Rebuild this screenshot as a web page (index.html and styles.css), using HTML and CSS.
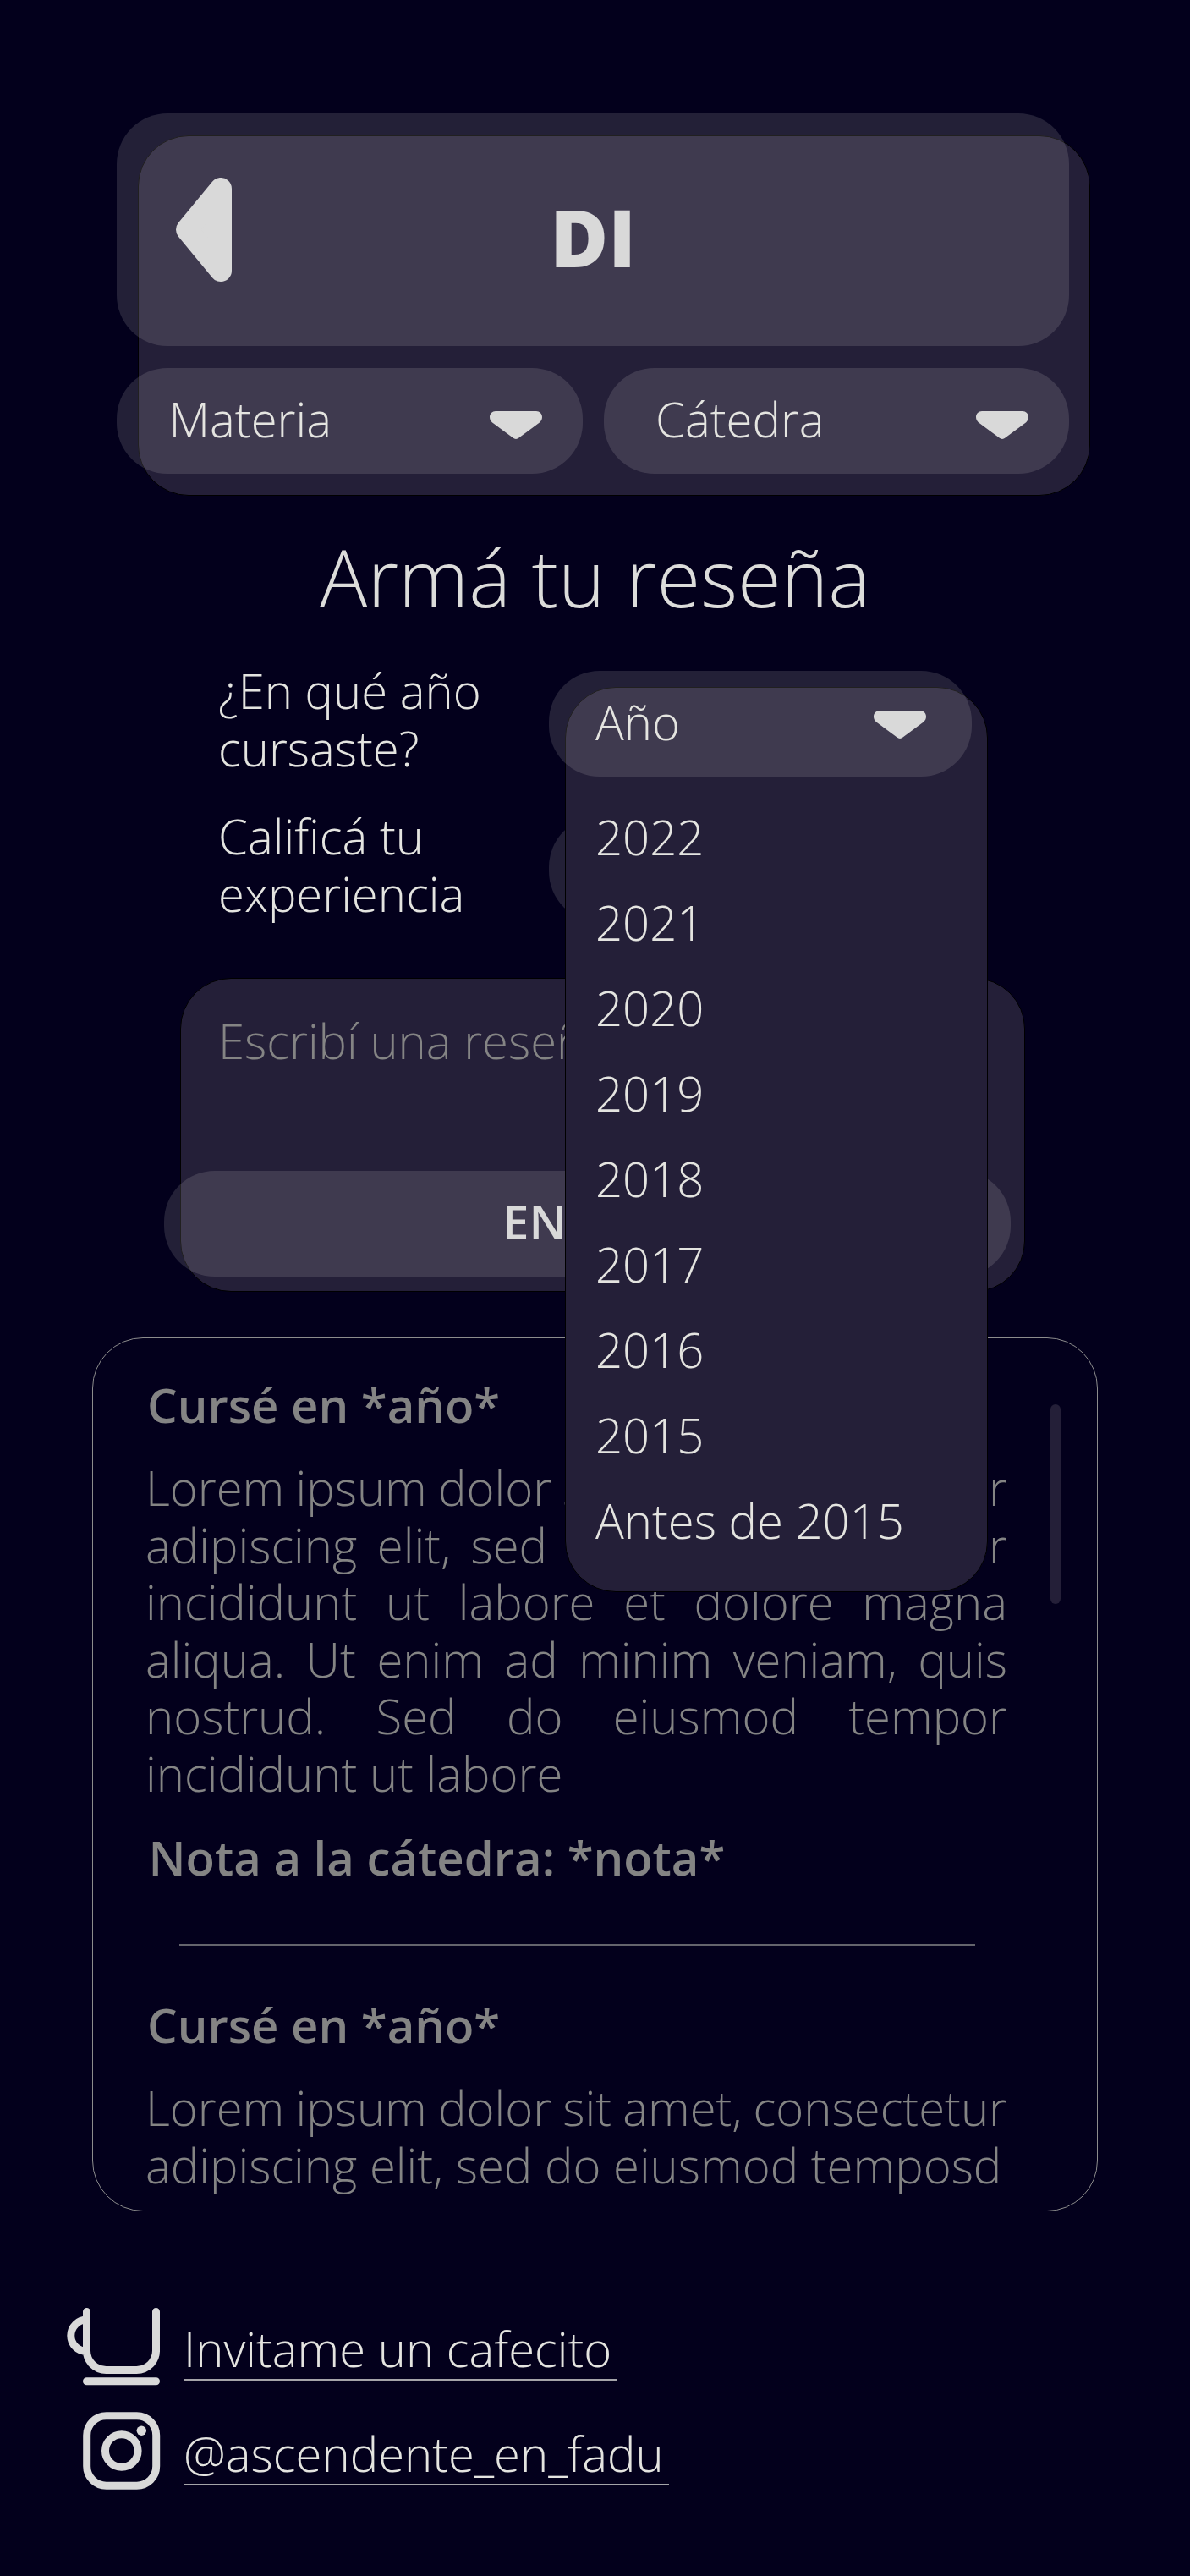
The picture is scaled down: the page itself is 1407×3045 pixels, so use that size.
FILE: index.html
```html
<!DOCTYPE html>
<html lang="es">
<head>
<meta charset="utf-8">
<title>Armá tu reseña</title>
<link rel="stylesheet" href="styles.css">
</head>
<body>
<svg class="sprite" width="0" height="0" aria-hidden="true">
  <symbol id="caret" viewBox="0 0 62 33">
    <path d="M7 0H55C58.900 0 62 3 62 7C62 9.500 61 11.500 59.200 13.200L34.500 31.600C32.500 33.300 29.500 33.300 27.500 31.600L2.800 13.200C1 11.500 0 9.500 0 7C0 3 3.100 0 7 0Z"/>
  </symbol>
</svg>
<header class="filters">
  <div class="title-bar">
    <svg class="back" viewBox="0 0 66 123"><path d="M53 13V110L13 61.500Z"/></svg>
    <h1>DI</h1>
  </div>
  <div class="filter-row">
    <div class="pill filter"><span>Materia</span><svg class="caret"><use href="#caret"/></svg></div>
    <div class="pill filter"><span>Cátedra</span><svg class="caret"><use href="#caret"/></svg></div>
  </div>
</header>
<main>
  <h2>Armá tu reseña</h2>
  <form>
    <div class="field">
      <label>¿En qué año<br>cursaste?</label>
      <div class="year">
        <ul class="menu">
          <li>2022</li><li>2021</li><li>2020</li><li>2019</li><li>2018</li><li>2017</li><li>2016</li><li>2015</li><li>Antes de 2015</li>
        </ul>
        <div class="pill year-pill"><span>Año</span><svg class="caret"><use href="#caret"/></svg></div>
      </div>
    </div>
    <div class="field">
      <label>Calificá tu<br>experiencia</label>
      <div class="pill"></div>
    </div>
    <div class="composer">
      <p>Escribí una reseña</p>
      <div class="pill send">ENVIAR</div>
    </div>
  </form>
  <section class="reviews">
    <div class="review-list">
      <article>
        <h3>Cursé en *año*</h3>
        <p><span class="tight">Lorem ipsum dolor sit amet, consectetur</span> adipiscing elit, sed do eiusmod tempor incididunt ut labore et dolore magna aliqua. Ut enim ad minim veniam, quis nostrud. Sed do eiusmod tempor incididunt ut labore</p>
        <h3 class="grade">Nota a la cátedra: *nota*</h3>
      </article>
      <hr>
      <article>
        <h3>Cursé en *año*</h3>
        <p><span class="tight">Lorem ipsum dolor sit amet, consectetur</span> adipiscing elit, sed do eiusmod temposd</p>
      </article>
    </div>
    <div class="scrollbar"></div>
  </section>
</main>
<footer>
  <div class="link">
    <svg class="cup" viewBox="0 0 110 92">
      <path d="M23.500 4.500V50A23 23 0 0 0 46.500 73.500H82.500A23 23 0 0 0 105.500 50V4.500M23.500 86.700H105.500M23.500 14.100A18.700 18.700 0 0 0 23.500 51.500"/>
    </svg>
    <a>Invitame un cafecito</a>
  </div>
  <div class="link">
    <svg class="insta" viewBox="0 0 92 92">
      <rect x="4.700" y="4.700" width="82" height="82.500" rx="23"/>
      <circle cx="45.800" cy="46" r="19.300"/>
      <circle class="dot" cx="69.300" cy="22.300" r="5.700"/>
    </svg>
    <a>@ascendente_en_fadu</a>
  </div>
</footer>
</body>
</html>
```
FILE: styles.css
```css
* { box-sizing: border-box; margin: 0; padding: 0; }
body {
  width: 1407px;
  height: 3045px;
  padding-top: 134px;
  background: #03001c;
  color: #e4e4e0;
  font: 300 56.25px/67.5px "Open Sans", sans-serif;
}
.sprite { position: absolute; }
.pill {
  height: 125px;
  border-radius: 60px;
  background: rgba(222, 217, 216, 0.15);
}
.caret { width: 62px; height: 33px; fill: #d9d9d9; }

.filters {
  position: relative;
  isolation: isolate;
  display: flex;
  flex-direction: column;
  gap: 26px;
  width: 1126px;
  margin-left: 138px;
}
.filters::before {
  content: "";
  position: absolute;
  z-index: -1;
  left: 25px;
  top: 26px;
  width: 1124px;
  height: 424px;
  border: 1px solid #000;
  border-radius: 60px;
  background: #241f38;
}
.title-bar {
  display: flex;
  align-items: center;
  height: 275px;
  padding: 0 136px 0 70px;
  border-radius: 60px;
  background: rgba(222, 217, 216, 0.15);
}
.back {
  width: 66px;
  height: 123px;
  fill: #d9d9d9;
  stroke: #d9d9d9;
  stroke-width: 26px;
  stroke-linejoin: round;
}
h1 {
  flex: 1;
  padding-top: 17px;
  text-align: center;
  font-size: 94px;
  line-height: 114px;
  font-weight: 800;
  color: #d9d9d9;
}
.filter-row { display: flex; gap: 25px; }
.filter {
  display: flex;
  flex: 1;
  align-items: center;
  justify-content: space-between;
  padding: 10px 48px 0 61.5px;
}
.filter span { margin-top: -13.5px; }

h2 {
  margin-top: 65px;
  text-align: center;
  font-size: 94.1px;
  line-height: 114px;
  font-weight: 300;
  color: #dcdcda;
}
form { margin-top: 44px; }
.field {
  display: grid;
  grid-template-columns: 391px 500px;
  align-items: end;
  height: 134.5px;
  margin: 0 0 37.5px 258px;
}
.field label { align-self: start; }
.year { position: relative; z-index: 2; }
.year-pill {
  position: relative;
  display: flex;
  justify-content: space-between;
  padding: 26.5px 54px 0 55px;
}
.year-pill .caret { margin-top: 20px; }
.menu {
  position: absolute;
  left: 19px;
  top: 19px;
  width: 500px;
  height: 1070px;
  padding: 126px 0 0 35px;
  border: 1px solid #000;
  border-radius: 60px;
  background: #241f38;
  list-style: none;
  line-height: 101px;
}
.composer {
  display: flex;
  flex-direction: column;
  justify-content: space-between;
  width: 999px;
  height: 371px;
  margin: 66.5px 0 0 213px;
  padding: 40px 0 17px;
  border: 1px solid #000;
  border-radius: 60px;
  background: #241f38;
}
.composer p { padding-left: 44px; color: #848484; }
.send {
  width: 1001px;
  margin-left: -20px;
  text-align: center;
  font-weight: 600;
  line-height: 119px;
  color: #d9d9d9;
}

.reviews {
  display: flex;
  justify-content: space-between;
  width: 1189px;
  height: 1033px;
  margin: 54px 0 0 109px;
  padding: 45px 43px 0 62px;
  border: 1px solid #8c8c8c;
  border-radius: 60px;
  color: #848484;
}
.review-list { width: 1019px; }
.reviews h3 { padding-left: 2px; font-size: 56.25px; font-weight: 600; line-height: 67px; }
.reviews p { margin-top: 31px; text-align: justify; }
.reviews .grade { margin-top: 32px; padding-left: 3.5px; }
.tight { word-spacing: -1.8px; }
hr { width: 941px; height: 2px; margin: 69px 0 60px 40px; border: 0; background: #64646c; }
.scrollbar { width: 12px; height: 236px; margin-top: 33px; border-radius: 6px; background: #241f38; }

footer { padding: 111px 0 0 79px; }
.link { display: flex; height: 124px; }
.link svg { fill: none; stroke: #d9d9d9; stroke-width: 9px; stroke-linecap: round; }
.cup { width: 110px; height: 92px; margin: 3px 28px 0 0; }
.insta { width: 92px; height: 92px; margin: 2px 27px 0 19px; }
.insta .dot { fill: #d9d9d9; stroke: none; }
.link a { height: 89px; padding: 18px 6px 0 0; border-bottom: 2px solid #a4a4a8; }
```
